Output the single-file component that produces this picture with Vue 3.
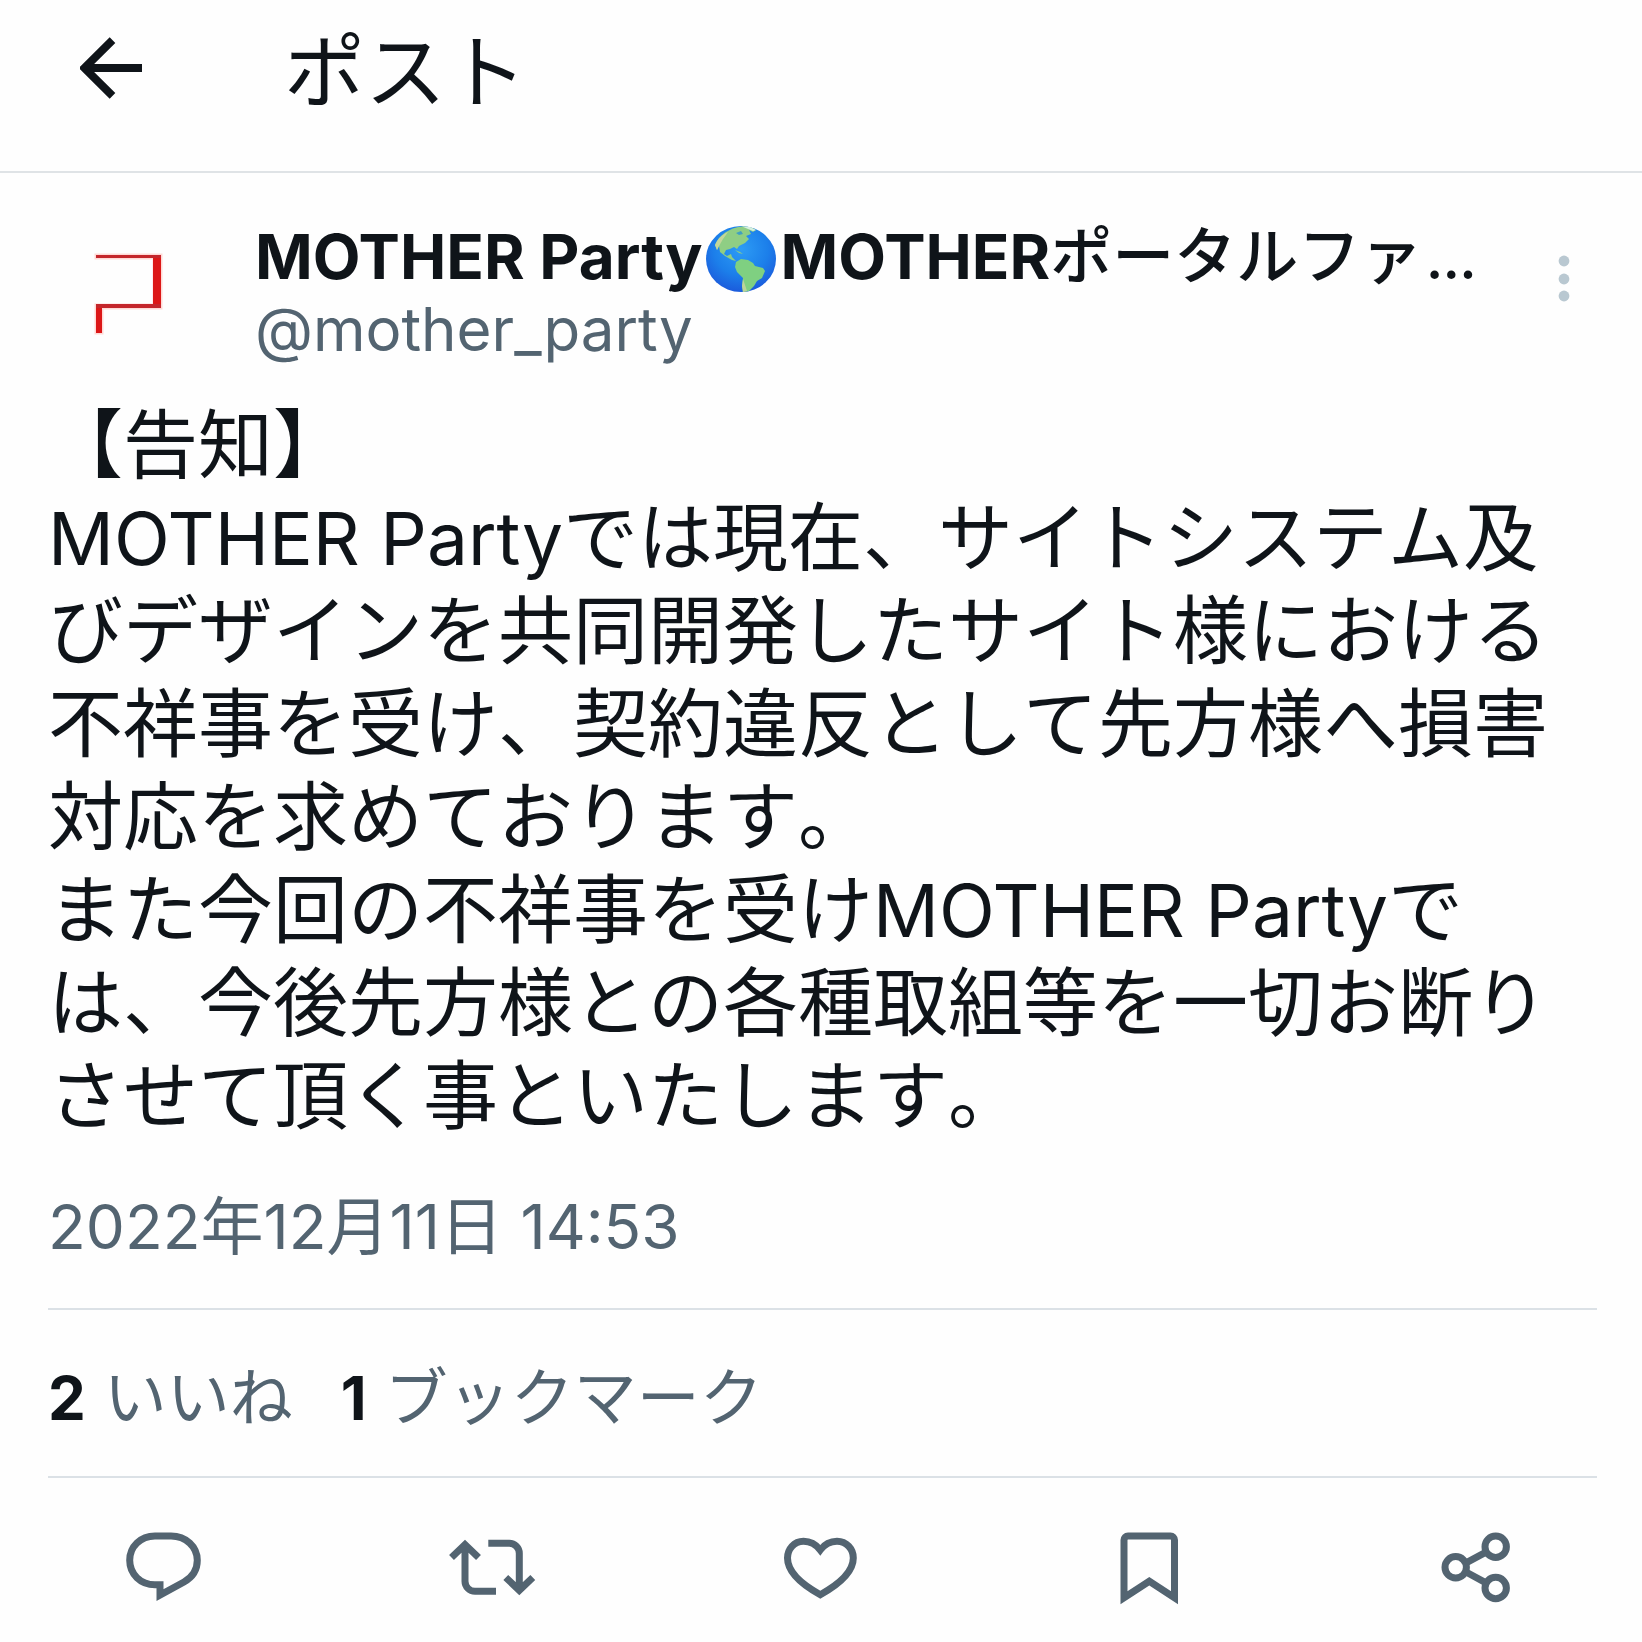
<script setup>
const bodyLines = [
  [{ t: '【告知】' }],
  [
    { t: 'MOTHER Party', latin: true },
    { t: 'では現在、サイトシステム及びデザインを共同開発したサイト様における不祥事を受け、契約違反として先方様へ損害対応を求めております。' },
  ],
  [
    { t: 'また今回の不祥事を受け' },
    { t: 'MOTHER Party', latin: true },
    { t: 'では、今後先方様との各種取組等を一切お断りさせて頂く事といたします。' },
  ],
]

const dateParts = [
  { t: '2022', latin: true },
  { t: '年' },
  { t: '12', latin: true },
  { t: '月' },
  { t: '11', latin: true },
  { t: '日' },
  { t: ' 14:53', latin: true },
]

const stats = [
  { count: 2, label: 'いいね' },
  { count: 1, label: 'ブックマーク' },
]

const actions = [
  {
    name: '返信',
    paths: ['M36 12H52C67 12 78.3 22.8 78.3 36.3C78.3 46 73 53.5 65 58L41 71V60.7H36C21.5 60.7 10.7 50 10.7 36.3S21.5 12 36 12Z'],
  },
  {
    name: 'リポスト',
    paths: [
      'M3.5 33.5L17 20.5L30.5 33.5M17 20.5V57.3a10 10 0 0 0 10 10H48',
      'M40.3 19.3H61.3a10 10 0 0 1 10 10V66.4M57.8 53.5L71.3 66.4L84.8 53.5',
    ],
  },
  {
    name: 'いいね',
    paths: ['M44.3 26C40 20.5 34 17.3 27.5 17.3C18 17.3 11.5 25 11.5 34C11.5 47 25 60 44.3 70.7C63.5 60 77.3 47 77.3 34C77.3 25 70.5 17.3 61 17.3C54.5 17.3 48.5 20.5 44.3 26Z'],
  },
  {
    name: 'ブックマーク',
    paths: ['M20 73.8V16a4 4 0 0 1 4-4H66.5a4 4 0 0 1 4 4V73.8L45.3 57.3Z'],
  },
  {
    name: '共有',
    paths: [
      'M12 43.3a10.7 10.7 0 1 0 21.4 0a10.7 10.7 0 1 0 -21.4 0',
      'M52 22.7a10.7 10.7 0 1 0 21.4 0a10.7 10.7 0 1 0 -21.4 0',
      'M52 64a10.7 10.7 0 1 0 21.4 0a10.7 10.7 0 1 0 -21.4 0',
      'M33 38.8L53 28.2M33 48L53 58.8',
    ],
  },
]
</script>

<template>
  <div class="page" lang="ja">
    <header class="topbar">
      <button class="icon-button" type="button" aria-label="戻る">
        <svg class="back" viewBox="0 0 64 62" aria-hidden="true">
          <path d="M32.500 3.200L4.500 31L32.500 58.800M4.500 31H62" />
        </svg>
      </button>
      <h1 class="title">ポスト</h1>
    </header>

    <article class="post">
      <div class="author">
        <svg class="avatar" viewBox="0 0 160 160" aria-hidden="true">
          <path d="M48 41H113V94H54V119H48V91H106V44H48Z" fill="#ffd9d6" stroke="#ffd9d6" stroke-width="3" />
          <path d="M105 41H113V94H105Z M48 90H54V119H48Z" fill="#dc1717" />
          <path d="M48 41H113V44H48Z M48 90H113V94H48Z" fill="#c4262b" />
        </svg>
        <div class="names">
          <div class="name">
            <span class="latin">MOTHER Party</span><svg class="globe" viewBox="0 0 72 68" role="img" aria-label="地球">
              <defs>
                <radialGradient id="sea" cx="0.5" cy="0.35" r="0.65">
                  <stop offset="0" stop-color="#2d9cf5" />
                  <stop offset="0.6" stop-color="#1c7fea" />
                  <stop offset="1" stop-color="#1b5bdc" />
                </radialGradient>
              </defs>
              <ellipse cx="36" cy="34" rx="35" ry="33" fill="url(#sea)" />
              <path d="M10 20C14 10 24 3 37 1.500C44 1.500 48 3 51 5L48 7L44 5L46 9L41 11L44 14L40 18L34 21L32 24L29 22L25 24L21 25L19 29L22 31L26 29L27 32L31 36L27 35L20 31L15 27L14 21L12 25Z" fill="#8fce84" />
              <path d="M31 37L36 34L43 35L48 38L50 41L58 43L60 46L57 53L52 56L49 61L44 66L38 67L37 61L38 53L32 47L30 42Z" fill="#7fd081" />
              <path d="M10 20C13 13 18 9 23 7L18 14L14 21L12 25Z" fill="#c4d69b" />
              <path d="M37 61L38 54L40 60L42 66L38 67Z" fill="#bdd49a" />
              <path d="M30 25L35 27L38 29L34 28Z" fill="#8fce84" />
              <path d="M31 8L36 6L38 9L34 10Z" fill="#3f9fc4" />
              <path d="M37 1.500L45 2L51 5L48 6L43 4Z" fill="#d6efe0" />
            </svg><span class="latin">MOTHER</span>ポータルファ<span class="ellipsis">…</span>
          </div>
          <a class="handle" href="#">@mother_party</a>
        </div>
        <button class="icon-button more" type="button" aria-label="その他">
          <svg viewBox="0 0 12 48" aria-hidden="true">
            <circle cx="6" cy="6" r="5.400" />
            <circle cx="6" cy="24" r="5.400" />
            <circle cx="6" cy="41" r="5.400" />
          </svg>
        </button>
      </div>

      <div class="body">
        <p v-for="(line, i) in bodyLines" :key="i"><span v-for="(part, j) in line" :key="j" :class="{ latin: part.latin }">{{ part.t }}</span></p>
      </div>

      <time class="date" datetime="2022-12-11T14:53"><span v-for="(part, i) in dateParts" :key="i" :class="{ latin: part.latin }">{{ part.t }}</span></time>

      <div class="stats">
        <a v-for="stat in stats" :key="stat.label" class="stat" href="#"><strong>{{ stat.count }}</strong><span>{{ stat.label }}</span></a>
      </div>
    </article>

    <nav class="actions" aria-label="操作">
      <button v-for="action in actions" :key="action.name" class="icon-button" type="button" :aria-label="action.name">
        <svg class="action-icon" viewBox="0 0 90 90" aria-hidden="true">
          <path v-for="d in action.paths" :key="d" :d="d" />
        </svg>
      </button>
    </nav>
  </div>
</template>

<style>
body {
  margin: 0;
  background: #fefefe;
}
</style>

<style scoped>
.page {
  color: #0f1419;
  font-family: "Inter", "Noto Sans CJK JP", sans-serif;
  font-kerning: none;
}

.latin {
  font-kerning: normal;
  line-height: 1;
}

.icon-button {
  display: flex;
  align-items: center;
  justify-content: center;
  padding: 0;
  border: 0;
  background: none;
}

.topbar {
  display: flex;
  align-items: center;
  height: 136px;
  padding: 0 80px 35px;
  border-bottom: 2px solid #dfe3e6;
}

.back {
  width: 64px;
  height: 62px;
  fill: none;
  stroke: #0f1419;
  stroke-width: 8;
}

.title {
  margin: 8px 0 0 140px;
  font-size: 81px;
  font-weight: 400;
  line-height: 96px;
}

.post {
  padding: 41px 45px 0 48px;
}

.author {
  display: flex;
  align-items: flex-start;
}

.avatar {
  flex: none;
  width: 160px;
  height: 160px;
}

.names {
  flex: 1;
  min-width: 0;
  margin: 7px 0 0 47px;
}

.name {
  height: 72px;
  font-size: 62px;
  font-weight: 500;
  line-height: 72px;
  white-space: nowrap;
}

.name .latin {
  font-weight: 700;
}

.ellipsis {
  margin-left: 4px;
  font-size: 50px;
  font-weight: 700;
  line-height: 1;
}

.globe {
  width: 72px;
  height: 68px;
  margin: 0 4px 0 2px;
  vertical-align: -14px;
}

.handle {
  display: block;
  color: #536471;
  font-size: 60px;
  font-kerning: normal;
  line-height: 72px;
  text-decoration: none;
}

.more {
  margin: 41px 27px 0 0;
}

.more svg {
  width: 12px;
  height: 48px;
  fill: #b9c8d1;
}

.body {
  margin-top: 24px;
  padding-right: 37px;
  font-size: 75px;
  line-height: 93px;
}

.body p {
  margin: 0;
}

.body .latin {
  font-size: 73px;
}

.date {
  display: block;
  margin-top: 48px;
  color: #536471;
  font-size: 63px;
  line-height: 72px;
}

.date .latin {
  font-size: 62px;
  white-space: pre;
}

.stats {
  display: flex;
  gap: 48px;
  margin-top: 46px;
  padding: 51px 0 42px;
  border: solid #dbe1e6;
  border-width: 2px 0;
}

.stat {
  display: flex;
  align-items: baseline;
  gap: 18px;
  color: #536471;
  font-size: 63px;
  line-height: 72px;
  text-decoration: none;
}

.stat strong {
  color: #0f1419;
  font-size: 60px;
}

.actions {
  display: grid;
  grid-template-columns: repeat(5, 1fr);
  padding: 46px 0 27px;
}

.action-icon {
  width: 90px;
  height: 90px;
  fill: none;
  stroke: #536471;
  stroke-width: 7;
}
</style>
